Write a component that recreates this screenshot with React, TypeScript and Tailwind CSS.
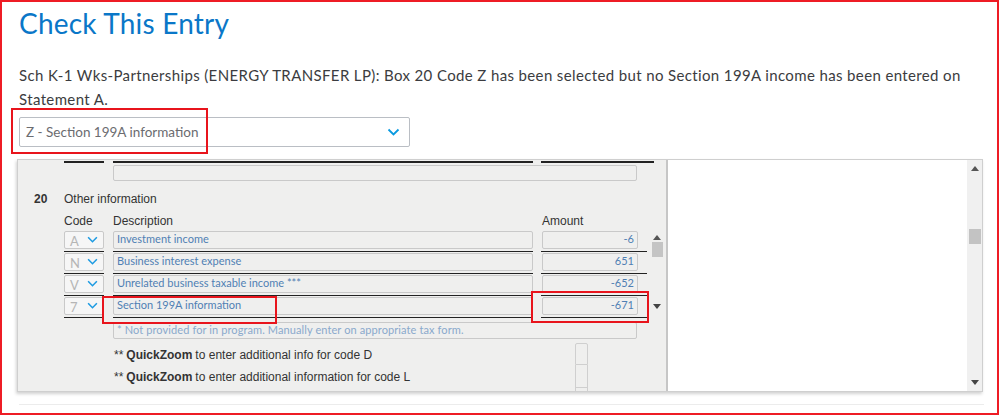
import React from 'react';

const rows = [
  { code: 'A', desc: 'Investment income', amount: '-6' },
  { code: 'N', desc: 'Business interest expense', amount: '651' },
  { code: 'V', desc: 'Unrelated business taxable income ***', amount: '-652' },
  { code: '7', desc: 'Section 199A information', amount: '-671' },
];

function Chevron({ className }: { className?: string }) {
  return (
    <svg viewBox="0 0 12 8" className={className} fill="none" stroke="currentColor" strokeWidth="1.8">
      <polyline points="1,1.5 6,6.5 11,1.5" />
    </svg>
  );
}

function UpArrow() {
  return (
    <svg viewBox="0 0 8 5" className="w-[8px] h-[5px] text-[#555]" fill="currentColor">
      <polygon points="4,0 8,5 0,5" />
    </svg>
  );
}

function DownArrow() {
  return (
    <svg viewBox="0 0 8 5" className="w-[8px] h-[5px] text-[#444]" fill="currentColor">
      <polygon points="0,0 8,0 4,5" />
    </svg>
  );
}

export default function App() {
  return (
    <div className="relative w-[999px] h-[415px] overflow-hidden bg-white border-2 border-[#ee1c25] font-['Lato',sans-serif]">
      {/* Header */}
      <div className="pl-[17px] pt-[3px]">
        <h1 className="text-[28px] leading-[36px] text-[#0a77c8] tracking-[0.2px]">Check This Entry</h1>
        <p className="mt-[22px] text-[15px] leading-[24px] text-[#3b3c40] tracking-[0.37px]">
          Sch K-1 Wks-Partnerships (ENERGY TRANSFER LP): Box 20 Code Z has been selected but no Section 199A income has been entered on
          Statement A.
        </p>

        {/* Dropdown */}
        <div className="mt-[6px] w-[391px] h-[30px] border border-[#babec4] rounded-[2px] flex items-center justify-between pl-[6px] pr-[9px]">
          <span className="text-[13.5px] text-[#6b6c70]">Z - Section 199A information</span>
          <Chevron className="w-[13px] h-[8px] text-[#0a9ae0]" />
        </div>
      </div>

      {/* Form panel */}
      <div className="ml-[15px] mt-[12px] w-[966px] h-[233px] flex border border-[#cfcfcf] shadow-[-1px_2px_3px_rgba(0,0,0,0.18)]">
        {/* Gray form area */}
        <div className="w-[650px] h-full bg-[#efefee] border-r-2 border-[#c6c6c6] overflow-hidden font-['Liberation_Sans',Arial,sans-serif] text-[12px] text-[#333]">
          {/* partial previous row */}
          <div className="flex pl-[46px] pt-[1px]">
            <div className="w-[40px] h-[1.5px] bg-[#222]" />
            <div className="ml-[9px] w-[420px] h-[1.5px] bg-[#222]" />
            <div className="ml-[8px] w-[113px] h-[1.5px] bg-[#222]" />
          </div>
          <div className="flex pl-[95px] mt-[2px]">
            <div className="w-[524px] h-[16px] border border-[#c9c9c9] rounded-[2px]" />
          </div>

          {/* Section 20 heading */}
          <div className="flex items-center mt-[10px] h-[16px]">
            <span className="w-[46px] pl-[16px] font-bold">20</span>
            <span>Other information</span>
          </div>
          <div className="flex items-center mt-[6px] h-[16px]">
            <span className="w-[95px] pl-[46px]">Code</span>
            <span className="w-[429px]">Description</span>
            <span>Amount</span>
          </div>

          {/* Rows with in-form scrollbar */}
          <div className="flex mt-[2px]">
            <div>
              {rows.map((r) => (
                <div key={r.code} className="pl-[46px] h-[22px]">
                  <div className="flex h-[18px]">
                    <div className="w-[40px] h-[18px] border border-[#c9c9c9] rounded-[2px] bg-[#f6f6f6] flex items-end justify-between pl-[5px] pr-[5px]">
                      <span className="font-['Lato',sans-serif] text-[13px] leading-[13px] text-[#b5b5b5]">{r.code}</span>
                      <Chevron className="w-[11px] h-[7px] mb-[5px] text-[#1d9be2]" />
                    </div>
                    <div className="ml-[9px] w-[420px] h-[18px] border border-[#c9c9c9] rounded-[2px] flex items-center pl-[3px] font-['Lato',sans-serif] text-[11px] text-[#4f7fb4]">
                      {r.desc}
                    </div>
                    <div className="ml-[9px] w-[96px] h-[18px] border border-[#c9c9c9] rounded-[2px] flex items-center justify-end pr-[3px] font-['Lato',sans-serif] text-[11px] text-[#4f7fb4]">
                      {r.amount}
                    </div>
                  </div>
                  <div className="flex mt-[2px]">
                    <div className="w-[40px] h-[1.5px] bg-[#222]" />
                    <div className="ml-[9px] w-[420px] h-[1.5px] bg-[#222]" />
                    <div className="ml-[8px] w-[106px] h-[1.5px] bg-[#222]" />
                  </div>
                </div>
              ))}
            </div>
            <div className="ml-[4px] w-[12px] flex flex-col items-center pt-[4px]">
              <UpArrow />
              <div className="mt-[2px] w-[11px] h-[15px] bg-[#c4c4c4]" />
              <div className="mt-[47px]">
                <DownArrow />
              </div>
            </div>
          </div>

          {/* Note */}
          <div className="pl-[95px] mt-[3px]">
            <div className="w-[524px] h-[17px] border border-[#c9c9c9] rounded-[2px] flex items-center pl-[3px] font-['Lato',sans-serif] text-[11px] text-[#8aa9cc] tracking-[0.1px]">
              * Not provided for in program. Manually enter on appropriate tax form.
            </div>
          </div>

          {/* QuickZoom lines */}
          <div className="flex pl-[96px] mt-[4px]">
            <div className="w-[461px]">
              <div className="h-[23px] flex items-center pt-[2px]">
                ** <b className="ml-[3px] mr-[3px]">QuickZoom</b> to enter additional info for code D
              </div>
              <div className="h-[23px] flex items-center">
                ** <b className="ml-[3px] mr-[3px]">QuickZoom</b> to enter additional information for code L
              </div>
            </div>
            <div className="w-[13px] flex flex-col">
              <div className="h-[22px] border border-[#cfcfcf] rounded-t-[2px]" />
              <div className="h-[23px] border border-t-0 border-[#cfcfcf]" />
              <div className="h-[22px] border border-t-0 border-[#cfcfcf]" />
            </div>
          </div>
        </div>

        {/* White area with scrollbar */}
        <div className="flex-1 flex bg-white">
          <div className="flex-1" />
          <div className="w-[15px] h-full bg-[#f0f0f0] flex flex-col items-center pt-[6px] pb-[6px]">
            <UpArrow />
            <div className="mt-[58px] w-[12px] h-[15px] bg-[#c3c3c3]" />
            <div className="flex-1" />
            <DownArrow />
          </div>
        </div>
      </div>

      {/* faint line below panel */}
      <div className="ml-[17px] mt-[12px] w-[965px] h-[1px] bg-[#ececec]" />

      {/* Red annotation boxes */}
      <div className="absolute left-[9px] top-[106px] w-[197px] h-[46px] border-2 border-[#e8141c]" />
      <div className="absolute left-[100px] top-[294px] w-[175px] h-[28px] border-2 border-[#e8141c]" />
      <div className="absolute left-[529px] top-[289px] w-[118px] h-[32px] border-2 border-[#e8141c]" />
    </div>
  );
}
